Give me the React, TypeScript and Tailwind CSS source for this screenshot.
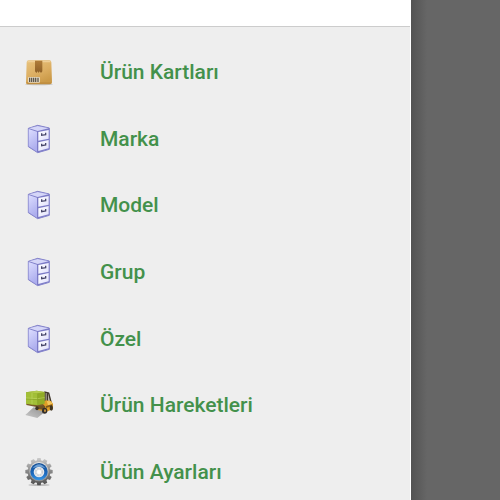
import React from "react";

const BoxIcon = () => (
  <svg viewBox="0 0 90 90" className="h-[30px] w-[30px]" aria-hidden="true">
    <defs>
      <linearGradient id="box-front" x1="0" y1="0" x2="0.5" y2="1">
        <stop offset="0" stopColor="#e8c37e" />
        <stop offset="0.6" stopColor="#dcae62" />
        <stop offset="1" stopColor="#cb9a48" />
      </linearGradient>
      <linearGradient id="box-tape" x1="0" y1="0" x2="0" y2="1">
        <stop offset="0" stopColor="#b07d3a" />
        <stop offset="1" stopColor="#8d5f26" />
      </linearGradient>
    </defs>
    <ellipse cx="45" cy="82" rx="42" ry="3" fill="#c2c2c2" />
    <path
      d="M14 10h62q6 0 6 6l2 59q0 7-7 7H12q-7 0-6-7l2-59q0-6 6-6z"
      fill="url(#box-front)"
    />
    <path d="M14 11h62q4 0 5 5H9q1-5 5-5z" fill="#efcf96" />
    <path d="M7 76h76q0 5-6 5H13q-6 0-6-5z" fill="#c08e40" />
    <path d="M33 11h22v32l-4 5-4-5-3 5-3-5-4 5-4-5z" fill="url(#box-tape)" />
    <rect x="12" y="60" width="36" height="17" rx="3" fill="#e6dac1" />
    <path
      d="M17 62v13M23 62v13M29 62v13M35 62v13M42 62v13"
      stroke="#5f584e"
      strokeWidth="4"
    />
  </svg>
);

const CabinetIcon = () => (
  <svg viewBox="0 0 90 90" className="h-[30px] w-[30px]" aria-hidden="true">
    <defs>
      <linearGradient id="cabinet-side" x1="0" y1="0" x2="0.3" y2="1">
        <stop offset="0" stopColor="#dcddff" />
        <stop offset="1" stopColor="#adaeee" />
      </linearGradient>
      <linearGradient id="cabinet-drawer" x1="0" y1="0" x2="1" y2="1">
        <stop offset="0" stopColor="#ffffff" />
        <stop offset="1" stopColor="#e0e0fc" />
      </linearGradient>
    </defs>
    <path
      d="M13 13l28-9 35 8v64l-35 10-28-18z"
      fill="#7c7bc6"
      stroke="#8584cc"
      strokeWidth="3"
      strokeLinejoin="round"
    />
    <path d="M14 15l25 8v60L14 67z" fill="url(#cabinet-side)" />
    <path d="M15 13l26-7 33 7-33 8z" fill="#d5d6f8" />
    <path d="M43 24l31-6v26l-31 6z" fill="url(#cabinet-drawer)" />
    <path d="M43 55l31-7v25l-31 8z" fill="url(#cabinet-drawer)" />
    <path
      d="M53 28v6l12-2v-6M53 59v6l12-2v-6"
      fill="none"
      stroke="#48476a"
      strokeWidth="4"
    />
  </svg>
);

const ForkliftIcon = () => (
  <svg viewBox="0 0 90 90" className="h-[30px] w-[30px]" aria-hidden="true">
    <defs>
      <linearGradient id="lift-shadow" x1="0" y1="1" x2="1" y2="0">
        <stop offset="0" stopColor="#c9c9c9" />
        <stop offset="1" stopColor="#8f8f8f" />
      </linearGradient>
    </defs>
    <path d="M29 52l36 12-25 20-36-9z" fill="url(#lift-shadow)" />
    <path d="M61 6l14 3 6 25-7 5-14-3z" fill="#bab4a7" />
    <path d="M63 43V6l11 3 7 27M70 10v27" fill="none" stroke="#40372b" strokeWidth="4" />
    <path d="M57 35l10-4 14 2 6 8-1 16-18 8-27-5-5-7 17-7z" fill="#df9e26" />
    <path d="M68 33l12 1 5 8-13 4z" fill="#f4c45a" />
    <path d="M34 46l23-3 8 8-8 8-21-3z" fill="#715224" />
    <path d="M66 48l19-5v5l-19 6z" fill="#80581a" />
    <path d="M7 41l49 1v6l-23 2-26-5z" fill="#795a2b" />
    <path d="M6 7l32-5 24 4v35l-21 5-35-5z" fill="#91ac27" />
    <path d="M6 7l32-5 24 4-21 4z" fill="#b3ca4f" />
    <path d="M6 8l35 2v35L6 41z" fill="#a2bf37" />
    <path d="M6 24l35 2 21-3M24 9v34" fill="none" stroke="#c0d663" strokeWidth="2" />
    <path d="M6 27l35 2 21-3M41 11v34" fill="none" stroke="#88a228" strokeWidth="2" />
    <ellipse cx="62" cy="62" rx="8" ry="9" fill="#332e29" />
    <ellipse cx="63" cy="62" rx="3" ry="4" fill="#c79441" />
    <ellipse cx="82" cy="54" rx="5" ry="8" fill="#403421" />
    <ellipse cx="39" cy="55" rx="5" ry="6" fill="#3f3425" />
  </svg>
);

const gearTeeth = [0, 30, 60, 90, 120, 150, 180, 210, 240, 270, 300, 330];

const GearIcon = () => (
  <svg viewBox="0 0 90 90" className="h-[30px] w-[30px]" aria-hidden="true">
    <defs>
      <linearGradient id="gear-metal" x1="0" y1="0" x2="0" y2="1">
        <stop offset="0" stopColor="#d0d0d0" />
        <stop offset="0.5" stopColor="#858585" />
        <stop offset="1" stopColor="#484848" />
      </linearGradient>
      <linearGradient id="gear-plate" x1="0" y1="0" x2="0" y2="1">
        <stop offset="0" stopColor="#e6e6e6" />
        <stop offset="1" stopColor="#8c8c8c" />
      </linearGradient>
      <linearGradient id="gear-ring" x1="0" y1="0" x2="0" y2="1">
        <stop offset="0" stopColor="#164f92" />
        <stop offset="0.6" stopColor="#1b69bd" />
        <stop offset="1" stopColor="#3a98e6" />
      </linearGradient>
    </defs>
    <ellipse cx="45" cy="84" rx="32" ry="3" fill="#bcbcbc" />
    <mask id="gear-shape">
      <circle cx="45" cy="44" r="34" fill="#fff" />
      {gearTeeth.map((angle) => (
        <path
          key={angle}
          d="M38 14l2-11h10l2 11z"
          fill="#fff"
          transform={`rotate(${angle} 45 44)`}
        />
      ))}
    </mask>
    <rect width="90" height="90" fill="url(#gear-metal)" mask="url(#gear-shape)" />
    <circle cx="45" cy="44" r="29" fill="url(#gear-plate)" />
    <circle cx="45" cy="44" r="26" fill="url(#gear-ring)" />
    <path d="M26 34q19-24 38 0-19-10-38 0z" fill="#6c9fd4" />
    <circle cx="45" cy="45" r="16" fill="#e4e8ec" />
    <circle cx="45" cy="45" r="10" fill="none" stroke="#c6cacf" strokeWidth="4" strokeDasharray="5 3" />
    <circle cx="45" cy="45" r="6" fill="#fff" />
  </svg>
);

const menuItems = [
  { label: "Ürün Kartları", icon: BoxIcon },
  { label: "Marka", icon: CabinetIcon },
  { label: "Model", icon: CabinetIcon },
  { label: "Grup", icon: CabinetIcon },
  { label: "Özel", icon: CabinetIcon },
  { label: "Ürün Hareketleri", icon: ForkliftIcon },
  { label: "Ürün Ayarları", icon: GearIcon },
];

function App() {
  return (
    <div className="flex h-screen overflow-hidden bg-[#666666] font-['Roboto','Noto_Sans',sans-serif]">
      {/* Drawer */}
      <aside className="flex w-[82.2%] shrink-0 flex-col bg-white">
        <div className="h-[26px] shrink-0" />
        <nav className="mr-px flex-1 border-t border-[#cccccc] bg-[#eeeeee] pt-3">
          <ul className="grid min-h-[466px] auto-rows-fr">
            {menuItems.map(({ label, icon: Icon }) => (
              <li key={label} className="flex">
                <a
                  href="#"
                  className="flex flex-1 items-center gap-[46px] pl-6 text-[21px] leading-6 font-medium text-[#43914b]">
                  <Icon />
                  <span>{label}</span>
                </a>
              </li>
            ))}
          </ul>
        </nav>
      </aside>

      {/* Dimmed page behind the drawer */}
      <div className="flex-1">
        <div className="h-full w-4 bg-linear-to-r from-[#535353] to-[#666666]" />
      </div>
    </div>
  );
}

export default App;
